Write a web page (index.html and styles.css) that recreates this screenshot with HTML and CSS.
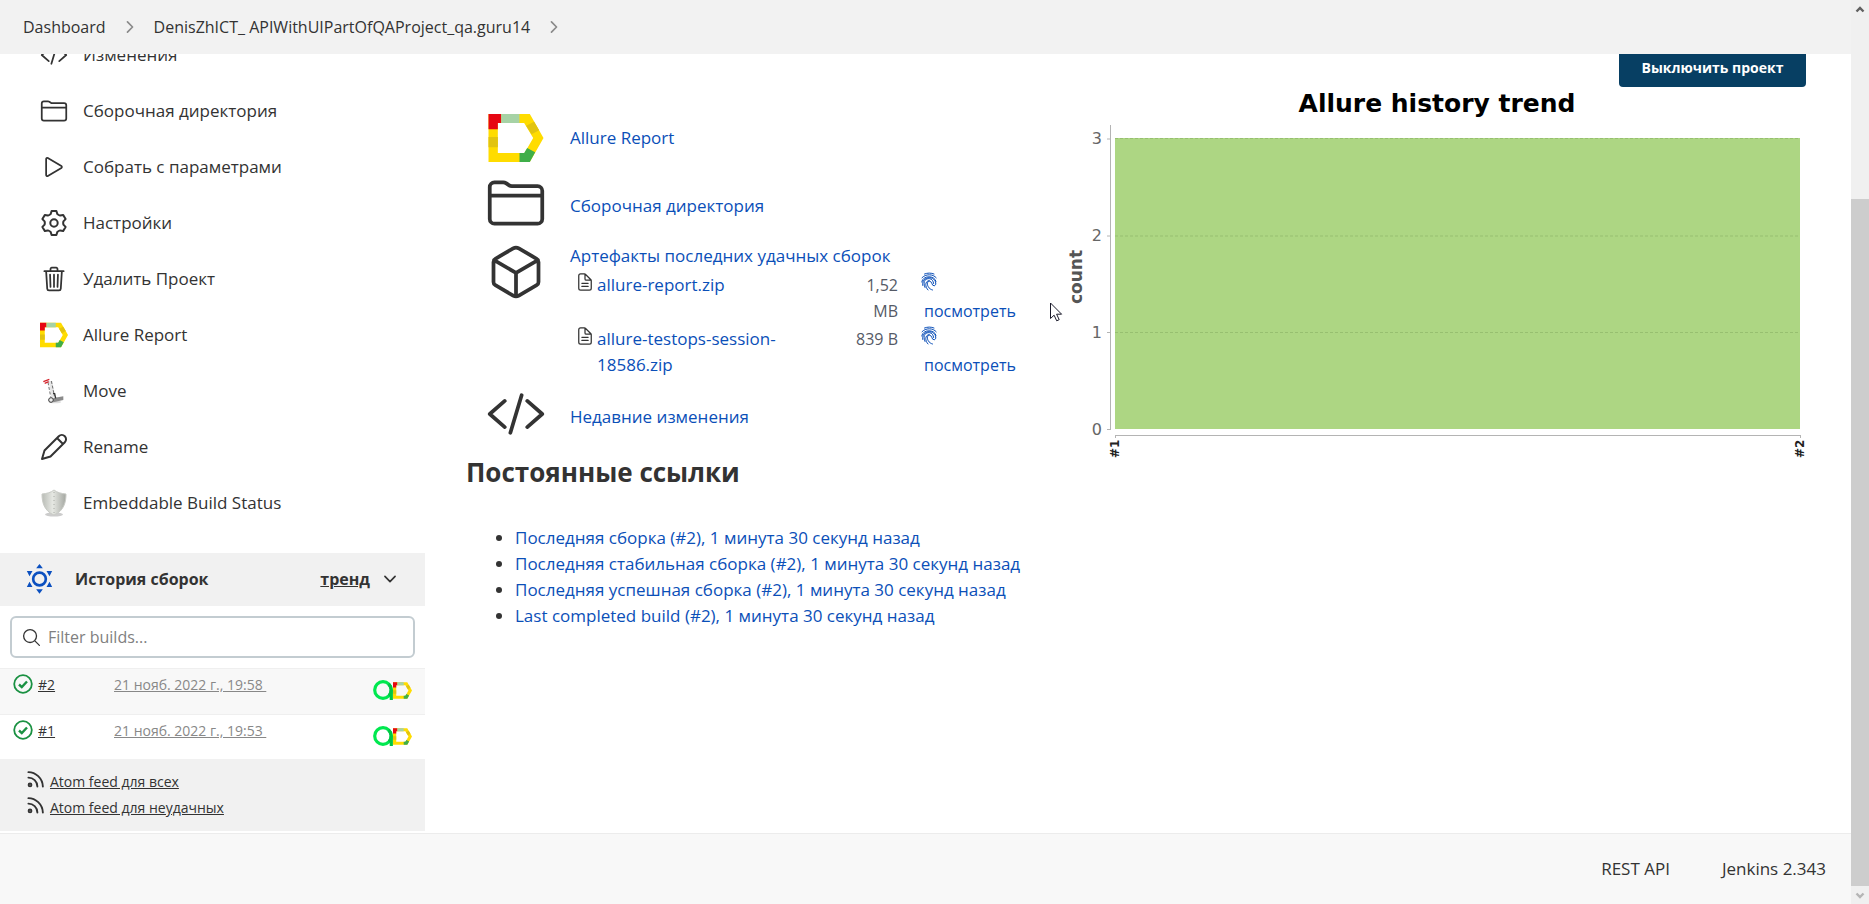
FILE: index.html
```
<!DOCTYPE html>
<html lang="ru">
<head>
<meta charset="utf-8">
<title>DenisZhICT_ APIWithUIPartOfQAProject_qa.guru14 [Jenkins]</title>
<link rel="stylesheet" href="styles.css">
</head>
<body>
<svg class="sprite" aria-hidden="true">
  <symbol id="code" viewBox="0 0 512 512"><path class="line" d="M160 368L32 256l128-112M352 368l128-112-128-112M304 96l-96 320"/></symbol>
  <symbol id="folder" viewBox="0 0 512 512"><path class="line" d="M440 432H72a40 40 0 01-40-40V120a40 40 0 0140-40h75.89a40 40 0 0122.19 6.72l27.84 18.56a40 40 0 0022.19 6.72H440a40 40 0 0140 40v240a40 40 0 01-40 40zM32 192h448"/></symbol>
  <symbol id="play" viewBox="0 0 512 512"><path class="line" d="M112 111v290c0 17.440 17 28.520 31 20.160l247.900-148.370c12.120-7.250 12.120-26.330 0-33.580L143 90.840c-14-8.360-31 2.720-31 20.160z"/></symbol>
  <symbol id="gear" viewBox="0 0 28 28"><path class="gearline" d="M11.600 2h4.800l.9 3Q18.700 6.200 20.100 6.600l3.100-.7 2.400 4.200-2.200 2.300Q22.900 14 23.400 15.600l2.200 2.300-2.400 4.200-3.100-.7Q18.700 21.800 17.300 23l-.9 3h-4.800l-.9-3Q9.300 21.800 7.900 21.400l-3.100.7-2.400-4.200 2.200-2.300Q5.100 14 4.600 12.400l-2.200-2.300 2.400-4.200 3.100.7Q9.300 6.200 10.700 5z"/><circle class="gearline" cx="14" cy="14" r="3.700"/></symbol>
  <symbol id="trash" viewBox="0 0 512 512"><path class="line" d="M112 112l20 320c.95 18.490 14.400 32 32 32h184c17.670 0 30.870-13.510 32-32l20-320M80 112h352M192 112V72a23.930 23.930 0 0124-24h80a23.930 23.930 0 0124 24v40M256 176v224M184 176l8 224M328 176l-8 224"/></symbol>
  <symbol id="cube" viewBox="0 0 512 512"><path class="line" d="M448 341.370V170.610A32 32 0 00432.110 143l-152-88.460a47.940 47.940 0 00-48.240 0L79.890 143A32 32 0 0064 170.610v170.760A32 32 0 0079.890 369l152 88.460a48 48 0 0048.240 0l152-88.460A32 32 0 00448 341.370zM69 154l187 110 187-110M256 464V264"/></symbol>
  <symbol id="doc" viewBox="0 0 512 512"><path class="line" d="M416 221.250V416a48 48 0 01-48 48H144a48 48 0 01-48-48V96a48 48 0 0148-48h98.750a32 32 0 0122.620 9.370l141.260 141.260a32 32 0 019.370 22.620zM256 56v120a32 32 0 0032 32h120M176 288h160M176 368h160"/></symbol>
  <symbol id="search" viewBox="0 0 512 512"><path class="line" d="M221.090 64a157.090 157.090 0 10157.090 157.090A157.100 157.100 0 00221.090 64zM338.290 338.290L448 448"/></symbol>
  <symbol id="pencil" viewBox="0 0 28 28"><path class="pen" d="M2 26l2.500-8.500L18.800 3.200a4 4 0 016 6L10.500 23.500zM17 5l6 6"/></symbol>
  <symbol id="down" viewBox="0 0 512 512"><path class="heavy" d="M112 184l144 144 144-144"/></symbol>
  <symbol id="right" viewBox="0 0 512 512"><path class="heavy" d="M184 112l144 144-144 144"/></symbol>
  <symbol id="rss" viewBox="0 0 18 18"><circle class="feed" cx="3.200" cy="14.800" r="1.500"/><path class="feed" d="M1.500 1.200C9 1.200 16.500 7.500 16.800 16.500M1.500 7c5 0 9.500 4 9.500 9.500"/></symbol>
  <symbol id="ok" viewBox="0 0 20 20"><circle cx="10" cy="10" r="8.800" fill="none" stroke="#1a9142" stroke-width="1.800"/><path d="M6 10.500l2.800 2.600L14 7.500" fill="none" stroke="#1a9142" stroke-width="2.400"/></symbol>
  <symbol id="allure" viewBox="0 0 165 144">
    <path fill="#ffdc00" d="M0 0h124l41 72-41 72H0zM28 27v90h80l26-45-27-45z" fill-rule="evenodd"/>
    <path fill="#e60613" d="M0 0h38v27H28v19H0z"/><path fill="#a6d2a5" d="M38 0h55v27H38z"/>
    <path fill="#e2c40f" d="M137 23l15 26-23 12-16-26zM0 69h28v31H0z"/><path fill="#3fae49" d="M116 102l24 13-16 29H93v-27h14z"/>
  </symbol>
  <symbol id="testops" viewBox="0 0 20 20"><path d="M18.300 10v10" stroke="#00c546" stroke-width="3.200"/><circle cx="10" cy="10" r="8.300" fill="none" stroke="#00e84f" stroke-width="3.200"/><path d="M15.500 4A8.300 8.300 0 0116 15.800" fill="none" stroke="#00c546" stroke-width="3.200"/></symbol>
  <symbol id="finger" viewBox="0 0 32 38"><path class="ridge" d="M7 4C13 1.500 20 1.500 26 4M2 11.500C9 3.500 24 3.500 30.500 11.500M1.500 20C3 6 28 6 30 19M3.500 27C0 8 27 6 29.500 22c.3 3-.8 5-3 5.500-6 .5-3-8-9-9-5-.5-6 6-3 11 2 3.500 5 5.500 8.500 6.500M8 31C2 16 11 13 16.500 13.300c6 .4 8 5 8.700 9.700M14 36c-6-6-7-18 2.500-19"/></symbol>
</svg>
<div class="window">
  <div class="page">
    <header class="crumbs">
      <a href="#">Dashboard</a>
      <svg class="sep"><use href="#right"/></svg>
      <a href="#">DenisZhICT_ APIWithUIPartOfQAProject_qa.guru14</a>
      <svg class="sep"><use href="#right"/></svg>
    </header>
    <div class="body">
      <aside class="side">
        <nav class="tasks">
          <a href="#"><svg><use href="#code"/></svg>Изменения</a>
          <a href="#"><svg><use href="#folder"/></svg>Сборочная директория</a>
          <a href="#"><svg><use href="#play"/></svg>Собрать с параметрами</a>
          <a href="#"><svg><use href="#gear"/></svg>Настройки</a>
          <a href="#"><svg><use href="#trash"/></svg>Удалить Проект</a>
          <a href="#"><svg><use href="#allure"/></svg>Allure Report</a>
          <a href="#"><svg viewBox="0 0 84 84"><ellipse cx="45" cy="75" rx="19" ry="4" fill="#ddd"/><path d="M23 12l5 10 6 40 12-2-9-48z" fill="#e6e6e6"/><path d="M24 16l8 43M34 12l9 44" stroke="#555" stroke-width="2.500" stroke-dasharray="9 5" fill="none"/><path d="M10 14l18-7M14 19l12-5" stroke="#d4222a" stroke-width="4"/><path d="M40 63l30-5v11l-30 7z" fill="#8b8b8b"/><path d="M39 50l5 0 3 14" stroke="#333" stroke-width="4" fill="none"/><circle cx="33" cy="69" r="7" fill="#eee" stroke="#333" stroke-width="3"/></svg>Move</a>
          <a href="#"><svg><use href="#pencil"/></svg>Rename</a>
          <a href="#"><svg viewBox="0 0 28 28"><defs><linearGradient id="steel"><stop offset="0" stop-color="#b9bcb6"/><stop offset=".45" stop-color="#e6e8e3"/><stop offset="1" stop-color="#a4a7a1"/></linearGradient></defs><ellipse cx="14" cy="25.500" rx="9" ry="2" fill="#ccc"/><path d="M14 1c3 2.500 7 3.500 12 4 0 8-2 17-12 21C4 22 2 13 2 5c5-.5 9-1.500 12-4z" fill="url(#steel)" stroke="#c9cbc6"/><path d="M14 3v21" stroke="#a9aca6" stroke-dasharray="1 3"/></svg>Embeddable Build Status</a>
        </nav>
        <section class="history">
          <div class="history-head">
            <svg class="sun" viewBox="0 0 78 90"><g fill="#0b50c0"><path d="M39 0l10 13H29zM39 89l10-13H29zM1 21h17L9 37zM77 21H60l9 16zM1 69h17L9 53zM77 69H60l9-16z"/></g><circle cx="39" cy="45" r="19" fill="none" stroke="#0b50c0" stroke-width="8"/></svg>
            <h3>История сборок</h3>
            <a href="#">тренд</a>
            <svg class="down"><use href="#down"/></svg>
          </div>
          <div class="filter">
            <svg><use href="#search"/></svg>
            <input type="text" placeholder="Filter builds..." aria-label="Filter builds">
          </div>
          <div class="build odd"><svg class="ok"><use href="#ok"/></svg><a class="num" href="#">#2</a><a class="date" href="#">21 нояб. 2022 г., 19:58&nbsp;</a><span class="badges"><svg class="to"><use href="#testops"/></svg><svg class="al"><use href="#allure"/></svg></span></div>
          <div class="build"><svg class="ok"><use href="#ok"/></svg><a class="num" href="#">#1</a><a class="date" href="#">21 нояб. 2022 г., 19:53&nbsp;</a><span class="badges"><svg class="to"><use href="#testops"/></svg><svg class="al"><use href="#allure"/></svg></span></div>
          <div class="feeds">
            <div><svg><use href="#rss"/></svg><a href="#">Atom feed для всех</a></div>
            <div><svg><use href="#rss"/></svg><a href="#">Atom feed для неудачных</a></div>
          </div>
        </section>
      </aside>
      <main class="main">
        <div class="actions"><button type="button">Выключить проект</button></div>
        <div class="cols">
          <div class="info">
            <div class="entry first"><svg class="logo"><use href="#allure"/></svg><a href="#">Allure Report</a></div>
            <div class="entry"><svg><use href="#folder"/></svg><a href="#">Сборочная директория</a></div>
            <div class="entry top"><svg><use href="#cube"/></svg>
              <div class="artifacts">
                <a href="#">Артефакты последних удачных сборок</a>
                <table>
                  <tr><td class="ic"><svg><use href="#doc"/></svg></td><td class="name"><a href="#">allure-report.zip</a></td><td class="size">1,52 MB</td><td class="view"><a href="#" aria-label="Отпечаток"><svg><use href="#finger"/></svg></a><a class="look" href="#">посмотреть</a></td></tr>
                  <tr><td class="ic"><svg><use href="#doc"/></svg></td><td class="name"><a href="#">allure-testops-session-18586.zip</a></td><td class="size">839 B</td><td class="view"><a href="#" aria-label="Отпечаток"><svg><use href="#finger"/></svg></a><a class="look" href="#">посмотреть</a></td></tr>
                </table>
              </div>
            </div>
            <div class="entry"><svg><use href="#code"/></svg><a href="#">Недавние изменения</a></div>
            <h2>Постоянные ссылки</h2>
            <ul>
              <li><a href="#">Последняя сборка (#2), 1 минута 30 секунд назад</a></li>
              <li><a href="#">Последняя стабильная сборка (#2), 1 минута 30 секунд назад</a></li>
              <li><a href="#">Последняя успешная сборка (#2), 1 минута 30 секунд назад</a></li>
              <li><a href="#">Last completed build (#2), 1 минута 30 секунд назад</a></li>
            </ul>
          </div>
          <svg class="chart" viewBox="0 0 746 380" role="img" aria-label="Allure history trend">
            <text class="title" x="377" y="25" text-anchor="middle">Allure history trend</text>
            <path d="M55 51h685v291H55z" fill="#add683"/>
            <path d="M55 51.500h685M55 149h685M55 245.500h685" stroke="#97bf70" stroke-dasharray="3 2"/>
            <path d="M50.500 38v305M47 52h4M47 149h4M47 245.500h4M47 342.500h4M55 348.500h686M55.500 348v3M740.500 348v3" fill="none" stroke="#b4b4b4"/>
            <g class="tick" text-anchor="end"><text x="42" y="57">3</text><text x="42" y="154">2</text><text x="42" y="251">1</text><text x="42" y="348">0</text></g>
            <text class="axis" transform="translate(22 190) rotate(-90)" text-anchor="middle">count</text>
            <text class="cat" transform="translate(59 371) rotate(-90)">#1</text>
            <text class="cat" transform="translate(744 371) rotate(-90)">#2</text>
          </svg>
        </div>
      </main>
    </div>
    <footer class="foot"><a href="#">REST API</a><a href="#">Jenkins 2.343</a></footer>
  </div>
  <div class="scroll">
    <svg viewBox="0 0 18 18"><path d="M5.500 11.500L9 8l3.500 3.500" fill="none" stroke="#606060" stroke-width="2.400"/></svg>
    <div class="above"></div><div class="thumb"></div>
    <svg viewBox="0 0 18 18"><path d="M5.500 7.500L9 11l3.500-3.500" fill="none" stroke="#b5b5b5" stroke-width="2.400"/></svg>
  </div>
  <svg class="cursor" viewBox="0 0 13 20"><path d="M.5 1v15.500l3.600-3.300 2.600 5.600 2.500-1.100-2.600-5.500h5z" fill="#fff" stroke="#1a1a2a"/></svg>
</div>
</body>
</html>
```
FILE: styles.css
```
* { box-sizing: border-box; }
body { margin: 0; font: 500 16px/26px "Open Sans", "Noto Sans", sans-serif; color: #333; background: #fff; }
a { color: #0b4fb8; text-decoration: none; }
svg { flex: none; }
.sprite { position: absolute; width: 0; height: 0; }
.line { fill: none; stroke: #333; stroke-width: 32; stroke-linecap: round; stroke-linejoin: round; }
.heavy { fill: none; stroke: currentColor; stroke-width: 48; stroke-linecap: round; stroke-linejoin: round; }
.gearline, .pen { fill: none; stroke: #333; stroke-width: 2; stroke-linejoin: round; }
.feed { fill: none; stroke: #333; stroke-width: 2; stroke-linecap: round; }
.ridge { fill: none; stroke: #0b4fb8; stroke-width: 2; stroke-linecap: round; }

.window { display: grid; grid-template-columns: minmax(0, 1fr) 18px; height: 100vh; overflow: hidden; }
.page { display: flex; flex-direction: column; min-height: 0; }
.crumbs { display: flex; flex: none; align-items: center; height: 54px; padding-left: 23px; background: #f2f2f2; z-index: 1; }
.crumbs a { color: #333; }
.sep { width: 18px; height: 18px; margin: 0 15px; color: #8a8a8a; }

.body { display: flex; flex: 1; min-height: 0; margin-top: -27px; }
.side { flex: 0 0 425px; }
.tasks a { display: flex; align-items: center; gap: 15px; height: 56px; padding-left: 40px; color: #333; font-size: 17px; }
.tasks svg { width: 28px; height: 28px; }
.history { margin-top: 22px; }
.history-head { display: flex; align-items: center; height: 53px; padding: 0 26px 2px; background: #f1f1f1; }
.history-head h3 { margin: 0 auto 0 22px; font-size: 16px; font-weight: 700; }
.history-head a { color: #333; font-weight: 700; text-decoration: underline; }
.sun { width: 27px; height: 30px; }
.down { width: 18px; height: 18px; margin-left: 11px; }
.filter { display: flex; align-items: center; gap: 4px; height: 42px; margin: 10px; padding-left: 9px; border: 2px solid #c3ccd1; border-radius: 6px; }
.filter svg { width: 21px; height: 21px; }
.filter input { flex: 1; min-width: 0; border: 0; outline: 0; background: none; font: 400 16px/26px "Open Sans", sans-serif; }
.filter input::placeholder { color: #808080; }
.build { display: flex; align-items: flex-start; height: 45px; padding: 5px 13px 0; font-size: 14px; line-height: 22px; border-top: 1px solid #efefef; font-weight: 400; }
.build.odd { height: 46px; background: #f8f8f8; }
.build a { text-decoration: underline; }
.ok { width: 20px; height: 20px; }
.num { width: 76px; margin-left: 5px; color: #333; }
.build .date { margin-right: auto; color: #888; }
.badges { display: flex; align-items: center; padding-top: 6px; }
.to { width: 20px; height: 20px; }
.al { width: 19px; height: 17px; }
.feeds { height: 72px; padding: 9px 27px; font-size: 14px; line-height: 24px; background: #f1f1f1; }
.feeds div { display: flex; gap: 6px; }
.feeds svg { width: 17px; height: 17px; margin-top: 3px; }
.feeds a { padding-top: 2px; color: #333; text-decoration: underline; }

.main { flex: 1; min-width: 0; padding: 21px 45px 0 41px; }
.actions { display: flex; justify-content: flex-end; }
.actions button { width: 187px; height: 39px; border: 0; border-radius: 4px; background: #073f63; color: #fff; font: 700 14px/20px "Open Sans", sans-serif; }
.cols { display: grid; grid-template-columns: 594fr 746fr; align-items: start; }
.info { padding-top: 23px; font-size: 17px; }
.entry { display: flex; align-items: center; gap: 24px; min-height: 56px; margin: 0 0 9px 20px; }
.entry > svg { width: 60px; height: 60px; margin: -2px 0; }
.entry > svg.logo { width: 56px; height: 48px; margin: 4px 2px; }
.entry > a { padding-top: 6px; }
.entry.first > a { padding-top: 0; }
.entry.top { align-items: flex-start; margin-bottom: 7px; padding-top: 4px; }
.artifacts { margin-top: -1px; }
.artifacts table { margin: 2px 0 0 5px; border-collapse: collapse; }
td { padding: 1px 0; vertical-align: top; }
.ic { width: 22px; }
.ic svg { display: block; width: 20px; height: 20px; }
.name { width: 210px; }
.size { width: 91px; padding-left: 39px; color: #555a66; font-size: 16px; font-weight: 400; text-align: right; }
.view { padding-left: 23px; font-size: 16px; }
.view svg { display: block; width: 16px; height: 19px; margin-bottom: 7px; }
.look { display: block; padding-left: 3px; }
h2 { margin: 12px 0 35px; font-size: 26px; line-height: 36px; font-weight: 700; }
ul { margin: 0; padding-left: 49px; }
.chart { width: 100%; }
.chart text { font-family: "DejaVu Sans", sans-serif; }
.chart .title { font-size: 25px; font-weight: 700; fill: #000; }
.tick { font-size: 16px; fill: #666; }
.chart .axis { font-size: 17px; font-weight: 700; fill: #555; }
.chart .cat { font-size: 12px; font-weight: 700; fill: #222; }

.foot { display: flex; flex: none; align-items: center; justify-content: flex-end; gap: 52px; height: 71px; padding-right: 25px; border-top: 1px solid #ececec; background: #f8f8f8; font-size: 17px; }
.foot a { color: #333; }
.scroll { display: flex; flex-direction: column; background: #f0f0f0; }
.scroll svg { width: 18px; height: 18px; }
.above { flex: 181; }
.thumb { flex: 687; background: #cdcdcd; }
.cursor { position: absolute; left: 1050px; top: 302px; width: 13px; height: 20px; }
```
